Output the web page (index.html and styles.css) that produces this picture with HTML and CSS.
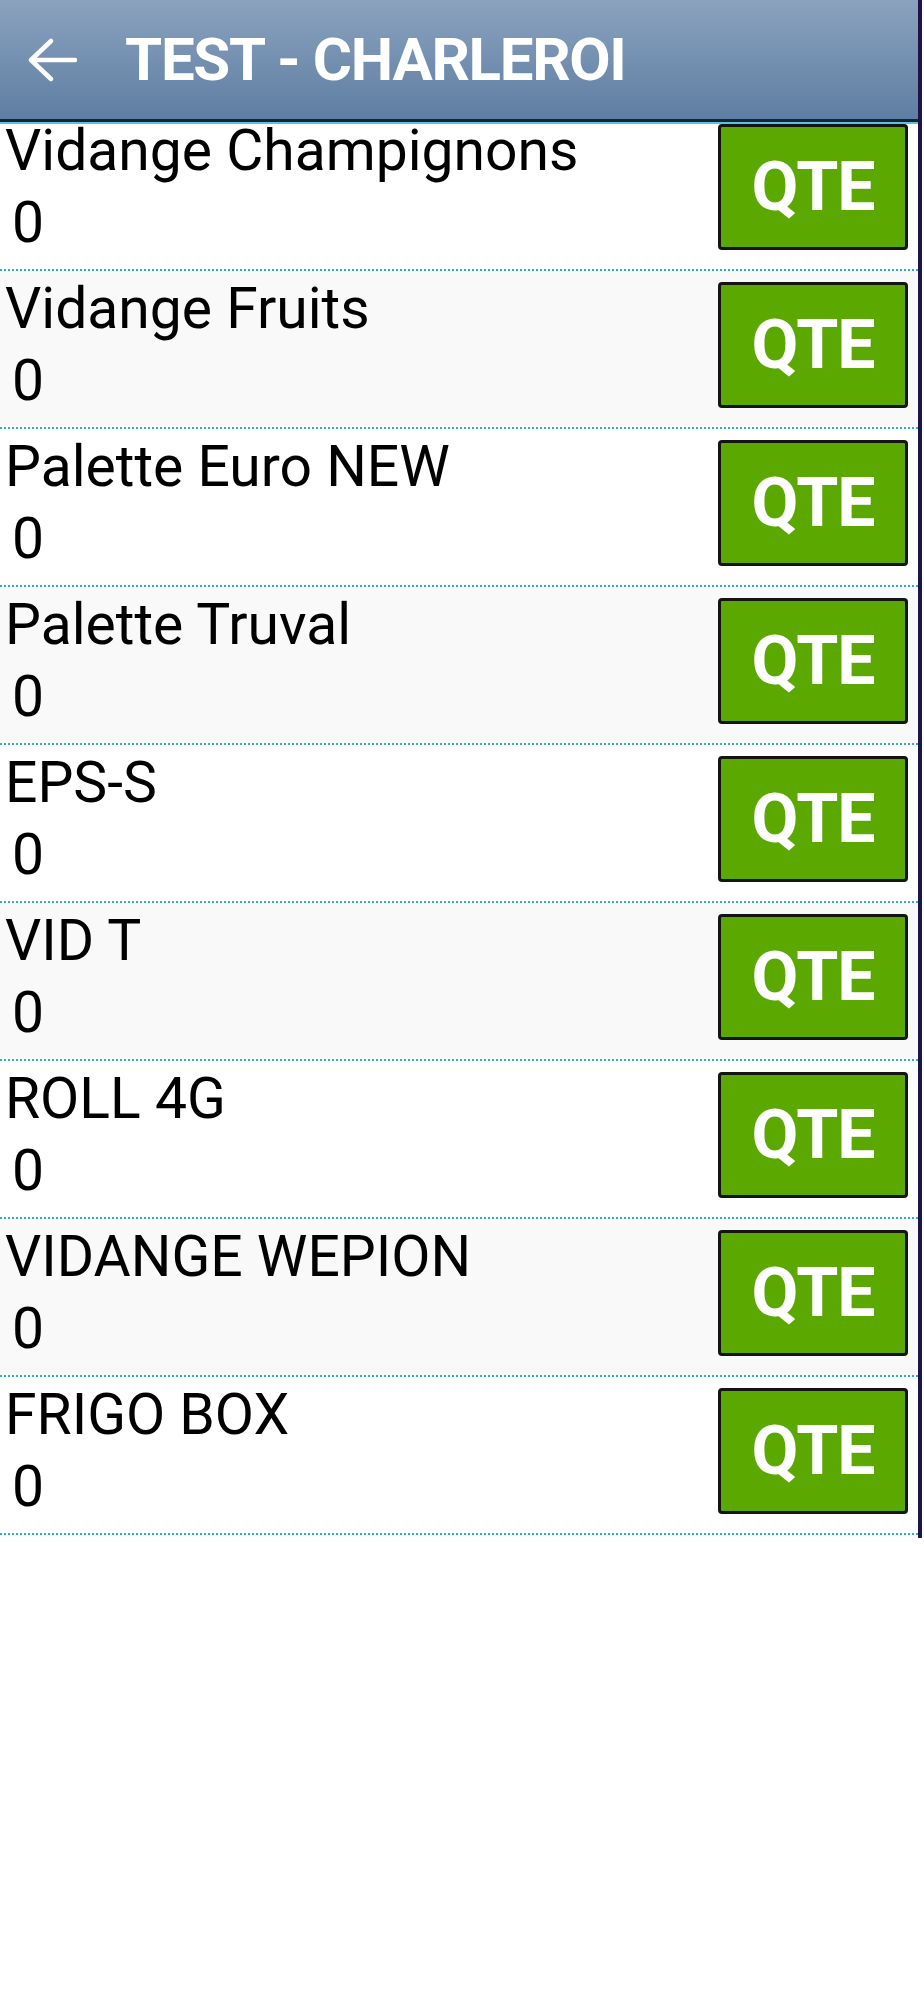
FILE: index.html
```html
<!DOCTYPE html>
<html lang="fr">
<head>
    <meta charset="UTF-8">
    <meta name="viewport" content="width=device-width, initial-scale=1.0">
    <title>TEST - CHARLEROI</title>
    <link rel="stylesheet" href="styles.css">
</head>
<body>
    <div class="screen">
        <header class="appbar">
            <a class="back" href="#">
                <svg width="50" height="44" viewBox="0 0 50 44">
                    <path d="M48 22H4M24 3L4 22L24 41" fill="none" stroke="#fff" stroke-width="4.5" stroke-linecap="round" stroke-linejoin="round"/>
                </svg>
            </a>
            <h1>TEST - CHARLEROI</h1>
        </header>

        <ul class="list">
            <li class="item">
                <div class="info"><div class="name">Vidange Champignons</div><div class="qty">0</div></div>
                <button class="btn">QTE</button>
            </li>
            <li class="item">
                <div class="info"><div class="name">Vidange Fruits</div><div class="qty">0</div></div>
                <button class="btn">QTE</button>
            </li>
            <li class="item">
                <div class="info"><div class="name">Palette Euro NEW</div><div class="qty">0</div></div>
                <button class="btn">QTE</button>
            </li>
            <li class="item">
                <div class="info"><div class="name">Palette Truval</div><div class="qty">0</div></div>
                <button class="btn">QTE</button>
            </li>
            <li class="item">
                <div class="info"><div class="name">EPS-S</div><div class="qty">0</div></div>
                <button class="btn">QTE</button>
            </li>
            <li class="item">
                <div class="info"><div class="name">VID T</div><div class="qty">0</div></div>
                <button class="btn">QTE</button>
            </li>
            <li class="item">
                <div class="info"><div class="name">ROLL 4G</div><div class="qty">0</div></div>
                <button class="btn">QTE</button>
            </li>
            <li class="item">
                <div class="info"><div class="name">VIDANGE WEPION</div><div class="qty">0</div></div>
                <button class="btn">QTE</button>
            </li>
            <li class="item">
                <div class="info"><div class="name">FRIGO BOX</div><div class="qty">0</div></div>
                <button class="btn">QTE</button>
            </li>
        </ul>
    </div>
</body>
</html>
```

FILE: styles.css
```css
body {
    margin: 0;
    padding: 0;
    background: #fff;
    font-family: Roboto, "Liberation Sans", sans-serif;
    color: #000;
}
.screen {
    width: 918px;
    border-right: 4px solid #1c1648;
    padding-bottom: 3px;
}
.appbar {
    position: relative;
    z-index: 1;
    height: 119px;
    display: flex;
    align-items: center;
    background: linear-gradient(#8ba2bf, #5e7ea2);
    border-bottom: 3px solid #1b2232;
    box-shadow: 0 2px 0 #5cc3dc;
}
.back {
    display: flex;
    margin-left: 27px;
    margin-right: 48px;
}
.appbar h1 {
    margin: 0;
    color: #fff;
    font-size: 60px;
    font-weight: 700;
    letter-spacing: -1.3px;
}
.list {
    list-style: none;
    margin: -9px 0 0 0;
    padding: 0;
}
.item {
    display: flex;
    justify-content: space-between;
    align-items: flex-start;
    height: 156px;
    padding-left: 5px;
    border-bottom: 2px dotted #2bb0c6;
    background: #fff;
}
.item:nth-child(even) {
    background: #f9f9f9;
}
.info {
    padding-top: 2px;
    font-size: 57px;
    line-height: 72px;
}
.qty {
    padding-left: 7px;
}
.btn {
    width: 190px;
    height: 126px;
    margin: 11px 10px 0 0;
    padding: 0;
    background: #5ba800;
    color: #fff;
    border: 3px solid #141414;
    border-radius: 4px;
    font-family: Roboto, "Liberation Sans", sans-serif;
    font-size: 68px;
    font-weight: 700;
    letter-spacing: -1px;
    cursor: pointer;
}
```
